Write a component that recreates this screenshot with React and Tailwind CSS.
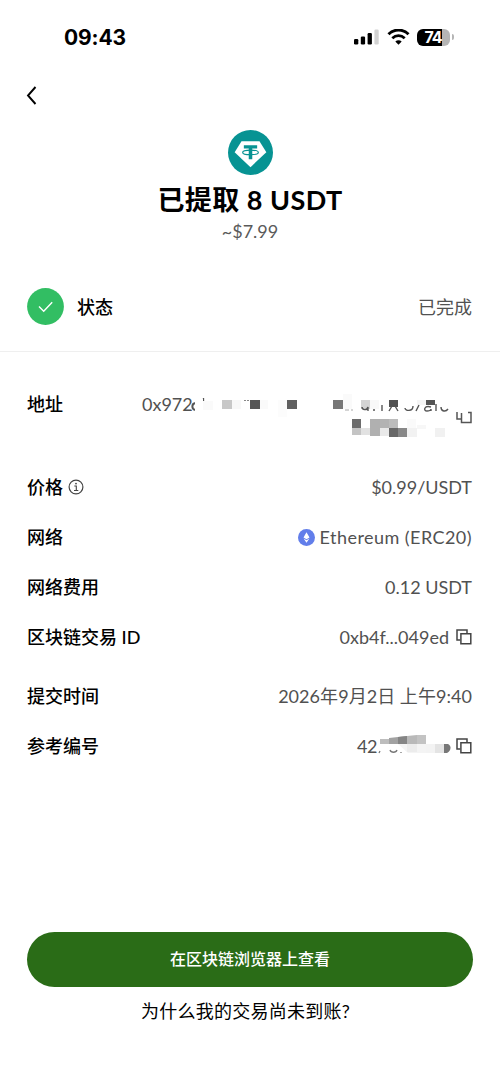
import clsx from "clsx";

const addressBlocks = [
  [195, 399, 8, 12, "#ffffff"],
  [203, 401, 10, 9, "#fafafa"],
  [222, 400, 10, 9, "#c8c8c8"],
  [232, 400, 9, 9, "#f8f8f8"],
  [250, 400, 10, 9, "#565656"],
  [260, 400, 8, 9, "#fafafa"],
  [278, 400, 9, 17, "#fcfcfc"],
  [287, 400, 10, 9, "#606060"],
  [333, 400, 10, 9, "#777777"],
  [343, 394, 9, 15, "#fafafa"],
  [361, 400, 9, 9, "#d3d3d3"],
  [370, 400, 9, 9, "#f8f8f8"],
  [389, 400, 9, 7, "#515151"],
  [426, 400, 9, 5, "#545454"],
  [417, 400, 9, 5, "#f5f5f5"],
  [352, 419, 9, 9, "#6c6c6c"],
  [352, 428, 9, 7, "#c4c4c4"],
  [361, 428, 9, 7, "#e2e2e2"],
  [370, 419, 10, 17, "#b0b0b0"],
  [380, 419, 9, 9, "#b3b3b3"],
  [380, 428, 9, 8, "#e9e9e9"],
  [389, 419, 9, 9, "#bcbcbc"],
  [389, 428, 9, 9, "#686868"],
  [398, 428, 9, 9, "#888888"],
  [407, 419, 9, 9, "#fafafa"],
  [407, 428, 10, 9, "#f2f2f2"],
  [417, 425, 9, 4, "#f7f7f7"],
  [435, 428, 10, 9, "#f1f1f1"],
];

function Blocks({ items }) {
  return items.map(([x, y, width, height, fill]) => (
    <rect key={`${x}-${y}`} x={x} y={y} width={width} height={height} fill={fill} />
  ));
}

function StatusBar() {
  return (
    <div className="flex h-[74px] items-center justify-between pl-16 pr-[46px]">
      <span className="pt-px font-[Inter] text-[21px] font-bold leading-6 tracking-[-0.1px]">09:43</span>
      <div className="flex items-center">
        <svg className="h-4 w-[26px]" viewBox="0 0 26 16" fill="black">
          <rect x="0" y="10" width="4.3" height="5.500" rx="1.2" />
          <rect x="6.8" y="7.5" width="4.3" height="8" rx="1.2" />
          <rect x="13.6" y="4" width="4.3" height="11.500" rx="1.2" />
          <rect x="20.4" y="0.5" width="4.3" height="15" rx="1.2" fill="#d2d2d2" />
        </svg>
        <svg className="ml-[7px] h-4 w-[23px]" viewBox="0 0 23 16" fill="none" stroke="black">
          <path d="M1.5 5.3C7.2-.3 15.8-.3 21.5 5.3" strokeWidth="3" />
          <path d="M5.3 9.2c3.6-3.4 8.8-3.4 12.4 0" strokeWidth="2.8" />
          <path d="M8.3 12.5c1.9-1.7 4.5-1.7 6.4 0L11.5 15.7z" fill="black" stroke="none" />
        </svg>
        <div className="ml-[7px] flex h-[17px] w-[33px] items-center justify-center rounded-[6px] bg-[linear-gradient(to_right,#000_75%,#b5b5b5_75%)]">
          <span className="pr-px font-[Inter] text-[16px] font-bold leading-4 tracking-[-1px] text-white">74</span>
        </div>
        <div className="ml-0.5 h-[6px] w-[2px] rounded-r-full bg-[#b5b5b5]" />
      </div>
    </div>
  );
}

function TetherLogo() {
  return (
    <svg className="h-[45px] w-[45px]" viewBox="0 0 46 46">
      <circle cx="23" cy="23" r="23" fill="#079393" />
      <path d="M13.8 11.5h18.4l7 11.2L23 38 6.8 22.7z" fill="white" />
      <path d="M16.2 15.7h13.6v3.2h-5V30h-3.6V18.9h-5z" fill="#079393" />
      <ellipse cx="23" cy="22.9" rx="8" ry="2.3" fill="none" stroke="#079393" strokeWidth="1.2" />
    </svg>
  );
}

function CopyIcon({ className }) {
  return (
    <svg
      className={clsx("h-4 w-4 shrink-0", className)}
      viewBox="0 0 16 16"
      fill="none"
      stroke="#444444"
      strokeWidth="1.5"
    >
      <path d="M4.3 11H1V1h10v3.2" />
      <path d="M4.9 4.7h9.9v10H4.9z" />
    </svg>
  );
}

function InfoIcon() {
  return (
    <svg className="ml-[5px] h-4 w-4" viewBox="0 0 16 16" fill="none" stroke="#444444">
      <circle cx="8" cy="8" r="6.9" strokeWidth="1.2" />
      <path d="M6.3 7h2v4.3M6 11.5h4.3" strokeWidth="1.1" />
      <circle cx="8" cy="4.6" r="0.9" fill="#444444" stroke="none" />
    </svg>
  );
}

function EthereumIcon() {
  return (
    <svg className="mr-[5px] h-[17px] w-[17px]" viewBox="0 0 17 17">
      <circle cx="8.5" cy="8.5" r="8.5" fill="#627eea" />
      <path d="M8.5 3.2l3 5.3-3 1.8-3-1.8zM5.6 9.5l2.9 1.7 2.9-1.7-2.9 4.2z" fill="white" />
    </svg>
  );
}

function Row({ label, info, children }) {
  return (
    <div className="flex h-[50px] items-center justify-between">
      <div className="flex items-center font-medium">
        {label}
        {info && <InfoIcon />}
      </div>
      <div className="flex items-center text-[#515151]">{children}</div>
    </div>
  );
}

function AddressMask() {
  return (
    <svg
      className="absolute left-[130px] top-0 h-[56px] w-[350px]"
      viewBox="130 385 350 56"
      fill="none"
    >
      <path d="M195 403c-3.500 1-3.500 6 0 7" stroke="#555555" strokeWidth="2" />
      <path d="M203.500 398v3" stroke="#555555" strokeWidth="1.300" />
      <path d="M244 400.500h5" stroke="#888888" strokeDasharray="2 1" />
      <Blocks items={addressBlocks} />
      {/* lower edges of the masked characters */}
      <g stroke="#555555" strokeWidth="1.4">
        <path d="M362 407c0 3 5 4 6 0v4M373 410h2M382 405v6M389 411l3-5M398 411l-3-5M405 408c0 3 8 4 8-2M416 411l3-6" />
        <path d="M431 407c-7-2-8 4-4 4 2 0 4-1 4-2v2M436 404v7M441 407c0 5 5 5 7 2" />
        <path d="M345 410h4M351 410h2" stroke="#aaaaaa" strokeWidth="1" />
      </g>
      <g stroke="#555555" strokeWidth="1.500">
        <path d="M457 412v7h4M461.500 413v9.500h9.500v-10h-3" />
      </g>
    </svg>
  );
}

function ReferenceMask() {
  return (
    <svg className="-ml-[3px] h-[22px] w-[77px]" viewBox="374 735 77 22" fill="none">
      <path
        d="M379 753l1-2M390 750c1 3 6 3 7 0M401 753v-1"
        stroke="#777777"
        strokeWidth="1.3"
      />
      <path d="M380 739h9v-1l9-1 9-1v8h-27z" fill="#a2a2a2" />
      <path d="M398 737l9-1v8h-9z" fill="#858585" />
      <path d="M407 736l10-1v9h-10z" fill="#b9b9b9" />
      <path d="M417 735h9v9h-9z" fill="#c3c3c3" />
      <path d="M380 739h9v5h-9z" fill="#bdbdbd" />
      <path d="M398 744h28v9h-18z" fill="#f4f4f4" />
      <path d="M407 744h10v8h-10z" fill="#ececec" />
      <path d="M426 744h9v9h-9z" fill="#f3f3f3" />
      <path d="M435 744h9v9h-9z" fill="#e4e4e4" />
      <path d="M444 744h4c4 2 3 7-1 9h-3z" fill="#777777" />
    </svg>
  );
}

export default function App() {
  return (
    <main className="flex h-[1086px] w-[500px] flex-col overflow-hidden bg-white font-['Lato','Noto_Sans_CJK_SC',sans-serif] text-[18px] leading-6 text-black">
      <StatusBar />

      {/* Back button */}
      <div className="flex h-[42px] items-center pl-[26px]">
        <svg className="h-[19px] w-[11px]" viewBox="0 0 11 19" fill="none" stroke="black" strokeWidth="1.9">
          <path d="M9.500 1L2 9.500 9.500 18" />
        </svg>
      </div>

      {/* Amount */}
      <header className="flex flex-col items-center pt-[14px]">
        <TetherLogo />
        <h1 className="mt-[9px] whitespace-nowrap text-[27px] font-bold leading-8 tracking-[0.45px]">
          已提取 8 USDT
        </h1>
        <p className="mt-[3px] text-[18px] text-[#5a5a5a]">~$7.99</p>
      </header>

      <section className="mt-[38px] flex h-[71px] shrink-0 items-start justify-between border-b border-[#efefef] pl-[27px] pr-7">
        <div className="flex h-[50px] items-center font-medium">
          <svg className="mr-[13px] h-[37px] w-[37px]" viewBox="0 0 37 37" fill="none">
            <circle cx="18.500" cy="18.500" r="18.400" fill="#32be63" />
            <path d="M12 18.500l4.700 4.700 8.500-9" stroke="white" strokeWidth="1.400" />
          </svg>
          <span className="pt-0.5">状态</span>
        </div>
        <span className="flex h-[50px] items-center pt-0.5 text-[#515151]">已完成</span>
      </section>

      <section className="relative mt-[33px] h-[77px] shrink-0 px-[27px]">
        <div className="flex h-[38px] items-center">
          <span className="w-[115px] font-medium">地址</span>
          <span className="text-[#515151]">0x972</span>
        </div>
        <AddressMask />
      </section>

      <section className="pl-[27px] pr-7">
        <Row label="价格" info>
          <span>$0.99/USDT</span>
        </Row>
        <Row label="网络">
          <EthereumIcon />
          <span className="tracking-[0.45px]">Ethereum (ERC20)</span>
        </Row>
        <Row label="网络费用">
          <span>0.12 USDT</span>
        </Row>
        <Row label="区块链交易 ID">
          <span>0xb4f...049ed</span>
          <CopyIcon className="ml-[7px]" />
        </Row>
        <div className="mt-[9px]">
          <Row label="提交时间">
            <span className="tracking-[0.05px]">2026年9月2日 上午9:40</span>
          </Row>
          <Row label="参考编号">
            <span className="tracking-[-0.5px]">42</span>
            <ReferenceMask />
            <CopyIcon className="ml-[5px]" />
          </Row>
        </div>
      </section>

      <footer className="mt-auto flex flex-col items-center px-[27px] pb-[63px]">
        <button className="h-[55px] w-full rounded-[28px] bg-[#2a6c17] pb-0.5 text-[16px] font-medium text-white">
          在区块链浏览器上查看
        </button>
        <a className="mr-[9px] mt-3 tracking-[0.25px]">为什么我的交易尚未到账?</a>
      </footer>
    </main>
  );
}
